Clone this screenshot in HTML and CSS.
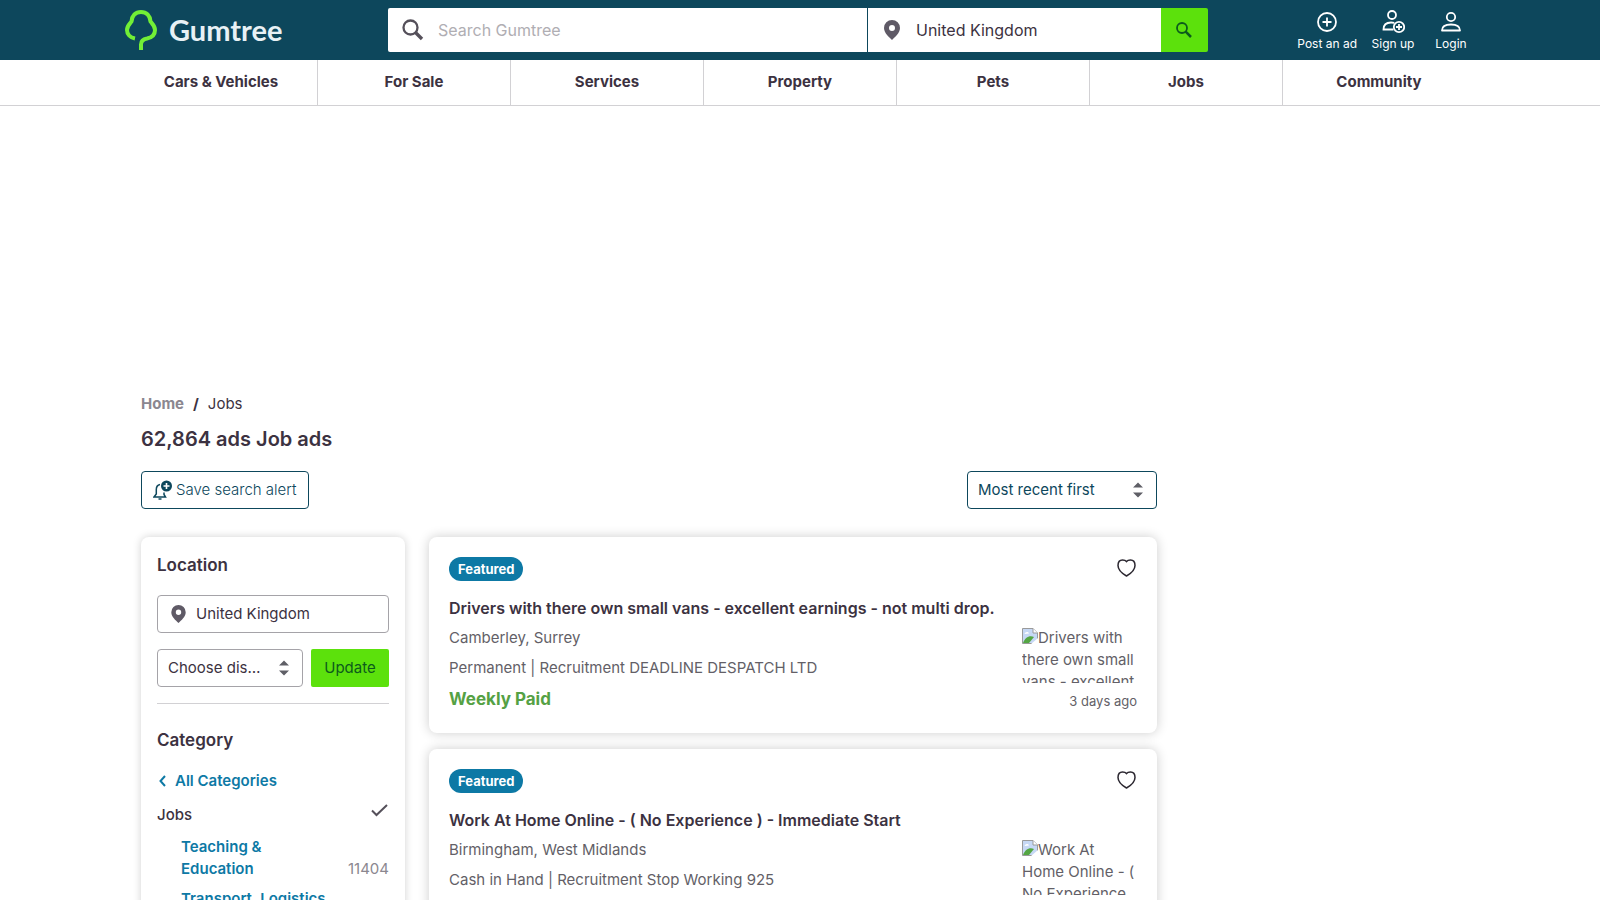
FILE: index.html
```
<!DOCTYPE html>
<html lang="en">
<head>
  <meta charset="utf-8">
  <meta name="viewport" content="width=device-width, initial-scale=1">
  <title>Jobs | Gumtree</title>
  <link rel="stylesheet" href="styles.css">
</head>
<body>
  <header class="header">
    <div class="container header-inner">
      <a href="#" class="logo">
        <svg width="32" height="40" viewBox="0 0 32 40" fill="none" stroke="#72ef36" stroke-width="4" aria-hidden="true">
          <path d="M10 28.5C5 27.5 2 24 2 20C2 16 4.500 14 6.500 11.500C7 5.500 10.500 2 16 2S25 5.500 25.500 11.500C27.500 14 30 16 30 20C30 24.500 27 27.500 22 28.500C18 29.200 16 31 16 34.500V40" stroke-linejoin="round"/>
        </svg>
        <span class="logo-text">Gumtree</span>
      </a>

      <form class="search">
        <label class="search-field search-keyword">
          <svg class="search-icon" width="22" height="22" viewBox="0 0 22 22" fill="none" stroke="#55505a" aria-hidden="true">
            <circle cx="8.500" cy="8.500" r="7" stroke-width="2.300"/>
            <path d="M13.500 13.500L20 20" stroke-width="3.400"/>
          </svg>
          <input type="text" placeholder="Search Gumtree" aria-label="Search Gumtree">
        </label>
        <label class="search-field search-location">
          <svg width="16" height="20" viewBox="0 0 16 20" fill="#5f5a66" fill-rule="evenodd" aria-hidden="true">
            <path d="M8 0a8 8 0 0 0-8 8c0 5 5 9 8 12 3-3 8-7 8-12a8 8 0 0 0-8-8zm0 5a3 3 0 1 1 0 6 3 3 0 0 1 0-6z"/>
          </svg>
          <input type="text" value="United Kingdom" aria-label="Location">
        </label>
        <button type="submit" class="search-button" aria-label="Search">
          <svg width="16" height="16" viewBox="0 0 16 16" fill="none" stroke="#0c5b1c" aria-hidden="true">
            <circle cx="6" cy="6" r="5" stroke-width="1.800"/>
            <path d="M9.700 9.700L15 15" stroke-width="2.500"/>
          </svg>
        </button>
      </form>

      <nav class="user-links">
        <a href="#">
          <svg width="24" height="24" viewBox="0 0 24 24" aria-hidden="true">
            <circle cx="12" cy="12" r="9"/>
            <path d="M12 7.500v9M7.500 12h9"/>
          </svg>
          <span>Post an ad</span>
        </a>
        <a href="#">
          <svg width="24" height="24" viewBox="0 0 24 24" aria-hidden="true">
            <circle cx="11" cy="5" r="4"/>
            <path d="M12.500 19.500H2.500C2.500 15 5.500 12.500 10 12.500c1.200 0 2.200.1 3.200.4"/>
            <circle cx="18" cy="17" r="5.200"/>
            <path d="M18 14v6M15 17h6"/>
          </svg>
          <span>Sign up</span>
        </a>
        <a href="#">
          <svg width="24" height="24" viewBox="0 0 24 24" aria-hidden="true">
            <circle cx="12" cy="7" r="4.200"/>
            <path d="M3 20.500c0-4 3-6 9-6s9 2 9 6z" stroke-linejoin="round"/>
          </svg>
          <span>Login</span>
        </a>
      </nav>
    </div>
  </header>

  <nav class="categories">
    <ul class="container">
      <li><a href="#">Cars &amp; Vehicles</a></li>
      <li><a href="#">For Sale</a></li>
      <li><a href="#">Services</a></li>
      <li><a href="#">Property</a></li>
      <li><a href="#">Pets</a></li>
      <li><a href="#">Jobs</a></li>
      <li><a href="#">Community</a></li>
    </ul>
  </nav>

  <div class="ad-banner"></div>

  <main class="container page">
    <div class="content">
      <div class="breadcrumb">
        <a href="#">Home</a>
        <b>/</b>
        <span>Jobs</span>
      </div>
      <h1>62,864 ads Job ads</h1>

      <div class="toolbar">
        <button type="button" class="save-button">
          <svg width="20" height="20" viewBox="0 0 20 20" fill="none" stroke="#0d475c" stroke-width="1.500" aria-hidden="true">
            <path d="M7 4.500C4.500 5 3.300 7 3.300 9.500V14L1 17H12.500L11 14.500V12.500"/>
            <path d="M5.500 19h3" stroke-width="1.500"/>
            <circle cx="13.500" cy="6" r="5.500" fill="#0d475c" stroke="none"/>
            <path d="M13.500 3v6M10.500 6h6" stroke="#fff" stroke-width="1.600"/>
          </svg>
          Save search alert
        </button>
        <div class="select sort-select">
          <select aria-label="Sort by">
            <option>Most recent first</option>
            <option>Nearest first</option>
          </select>
          <svg width="10" height="16" viewBox="0 0 10 16" fill="#5f5f66" aria-hidden="true"><path d="M0 5.500L5 0.500L10 5.500zM0 10.500L5 15.500L10 10.500z"/></svg>
        </div>
      </div>

      <div class="columns">
        <aside class="sidebar">
          <section class="location">
            <h2>Location</h2>
            <label class="location-input">
              <svg width="15" height="18" viewBox="0 0 16 20" fill="#5f5a66" fill-rule="evenodd" aria-hidden="true">
                <path d="M8 0a8 8 0 0 0-8 8c0 5 5 9 8 12 3-3 8-7 8-12a8 8 0 0 0-8-8zm0 5a3 3 0 1 1 0 6 3 3 0 0 1 0-6z"/>
              </svg>
              <input type="text" value="United Kingdom" aria-label="Location">
            </label>
            <div class="location-row">
              <div class="select distance-select">
                <select aria-label="Distance">
                  <option>Choose distance</option>
                  <option>+ 5 miles</option>
                </select>
                <svg width="10" height="16" viewBox="0 0 10 16" fill="#5f5f66" aria-hidden="true"><path d="M0 5.500L5 0.500L10 5.500zM0 10.500L5 15.500L10 10.500z"/></svg>
              </div>
              <button type="button" class="update-button">Update</button>
            </div>
          </section>

          <section class="category">
            <h2>Category</h2>
            <a href="#" class="all-categories">
              <svg width="7" height="12" viewBox="0 0 7 12" fill="none" stroke="#0d79a5" stroke-width="2" aria-hidden="true"><path d="M6 1L1.500 6L6 11"/></svg>
              All Categories
            </a>
            <div class="current-category">
              <span>Jobs</span>
              <svg width="18" height="14" viewBox="0 0 18 14" fill="none" stroke="#55505a" stroke-width="2" aria-hidden="true"><path d="M1 6.500L5.500 11L16 1"/></svg>
            </div>
            <ul class="subcategories">
              <li><a href="#">Teaching &amp; Education</a><span>11404</span></li>
              <li><a href="#">Transport, Logistics &amp; Delivery</a><span>8210</span></li>
            </ul>
          </section>
        </aside>

        <div class="listings">
          <article class="card">
            <div class="card-top">
              <span class="badge">Featured</span>
              <button type="button" class="heart" aria-label="Save this ad">
                <svg width="20" height="18" viewBox="0 0 20 18" fill="none" stroke="#2b2730" stroke-width="1.500" aria-hidden="true"><path d="M9.500 17C6 15 1 11 1 6.500C1 3 3 1 5.500 1C7.500 1 8.800 1.600 9.500 2.500C10.200 1.600 11.500 1 13.500 1C16 1 18 3 18 6.500C18 11 13 15 9.500 17z"/></svg>
              </button>
            </div>
            <h3><a href="#">Drivers with there own small vans - excellent earnings - not multi drop.</a></h3>
            <div class="card-body">
              <div class="card-text">
                <p>Camberley, Surrey</p>
                <p>Permanent | Recruitment DEADLINE DESPATCH LTD</p>
                <p class="pay">Weekly Paid</p>
              </div>
              <div class="card-side">
                <div class="thumb">
                  <svg width="16" height="16" viewBox="0 0 16 16" aria-hidden="true"><path d="M.5.500H11L15.500 5V15.500H.5z" fill="#c6d8f5" stroke="#9a9a9a"/><path d="M1 15C3 10 7 7 12 9L7 15z" fill="#54a643"/><path d="M2.500 6C3 4 6 3 7 5.500z" fill="#fff"/><path d="M11 .5V5H15.500zM16 10V16H9z" fill="#fff"/><path d="M11 .5V5H15.500" fill="none" stroke="#9a9a9a"/></svg><span>Drivers with<br>there own small<br>vans - excellent</span>
                </div>
                <time>3 days ago</time>
              </div>
            </div>
          </article>

          <article class="card">
            <div class="card-top">
              <span class="badge">Featured</span>
              <button type="button" class="heart" aria-label="Save this ad">
                <svg width="20" height="18" viewBox="0 0 20 18" fill="none" stroke="#2b2730" stroke-width="1.500" aria-hidden="true"><path d="M9.500 17C6 15 1 11 1 6.500C1 3 3 1 5.500 1C7.500 1 8.800 1.600 9.500 2.500C10.200 1.600 11.500 1 13.500 1C16 1 18 3 18 6.500C18 11 13 15 9.500 17z"/></svg>
              </button>
            </div>
            <h3><a href="#">Work At Home Online - ( No Experience ) - Immediate Start</a></h3>
            <div class="card-body">
              <div class="card-text">
                <p>Birmingham, West Midlands</p>
                <p>Cash in Hand | Recruitment Stop Working 925</p>
              </div>
              <div class="card-side">
                <div class="thumb">
                  <svg width="16" height="16" viewBox="0 0 16 16" aria-hidden="true"><path d="M.5.500H11L15.500 5V15.500H.5z" fill="#c6d8f5" stroke="#9a9a9a"/><path d="M1 15C3 10 7 7 12 9L7 15z" fill="#54a643"/><path d="M2.500 6C3 4 6 3 7 5.500z" fill="#fff"/><path d="M11 .5V5H15.500zM16 10V16H9z" fill="#fff"/><path d="M11 .5V5H15.500" fill="none" stroke="#9a9a9a"/></svg><span>Work At<br>Home Online - (<br>No Experience</span>
                </div>
              </div>
            </div>
          </article>
        </div>
      </div>
    </div>
  </main>
</body>
</html>
```
FILE: styles.css
```
* {
  box-sizing: border-box;
}

body {
  margin: 0;
  font-family: Inter, "Open Sans", sans-serif;
  font-size: 15px;
  line-height: 22px;
  color: #3c3241;
  background-color: #fff;
}

a {
  color: inherit;
  text-decoration: none;
}

h1, h2, h3, p, ul {
  margin: 0;
  padding: 0;
}

ul {
  list-style: none;
}

button, input, select {
  font: inherit;
  color: inherit;
}

button {
  cursor: pointer;
}

.container {
  max-width: 1350px;
  margin: 0 auto;
}

/* Header */
.header {
  background-color: #0d475c;
}

.header-inner {
  display: flex;
  align-items: center;
  height: 60px;
}

.logo {
  display: flex;
  align-items: center;
  gap: 12px;
  width: 263px;
}

.logo-text {
  font-family: Lato, sans-serif;
  font-size: 29px;
  font-weight: 700;
  line-height: 36px;
  color: #e8f1f5;
}

.search {
  display: flex;
  flex: 1;
  max-width: 820px;
  height: 44px;
}

.search-field {
  display: flex;
  align-items: center;
  gap: 16px;
  padding: 0 16px;
  background-color: #fff;
}

.search-keyword {
  flex: 1;
  gap: 14px;
  padding-left: 14px;
  margin-right: 1px;
  border-radius: 2px 0 0 2px;
}

.search-field input {
  flex: 1;
  min-width: 0;
  padding: 0;
  border: none;
  outline: none;
  background: none;
  font-size: 16px;
}

.search-field input::placeholder {
  color: #b0aeb3;
}

.search-location {
  width: 293px;
}

.search-button {
  display: flex;
  align-items: center;
  justify-content: center;
  width: 47px;
  padding: 0 2px 0 0;
  border: none;
  border-radius: 0 2px 2px 0;
  background-color: #5ce10c;
}

.user-links {
  display: flex;
  gap: 14px;
  margin-left: auto;
  padding-top: 2px;
  padding-right: 2px;
  color: #fff;
  font-size: 12px;
  line-height: 16px;
}

.user-links a {
  display: flex;
  flex-direction: column;
  align-items: center;
  min-width: 44px;
  gap: 2px;
}

.user-links svg {
  fill: none;
  stroke: #fff;
  stroke-width: 1.8;
}

/* Category bar */
.categories {
  border-bottom: 1px solid #d2d1d4;
}

.categories ul {
  display: flex;
}

.categories li {
  flex: 1;
  text-align: center;
  font-weight: 700;
}

.categories li + li {
  border-left: 1px solid #d2d1d4;
}

.categories a {
  display: block;
  padding: 11px 0 12px;
}

.ad-banner {
  height: 287px;
}

/* Page */
.page {
  padding: 0 16px;
}

.content {
  max-width: 1016px;
}

.breadcrumb {
  display: flex;
  gap: 9px;
}

.breadcrumb a {
  font-weight: 700;
  color: #8b8790;
}

h1 {
  margin-top: 10px;
  font-size: 20px;
  font-weight: 600;
  line-height: 28px;
}

.toolbar {
  display: flex;
  justify-content: space-between;
  margin-top: 18px;
  color: #0d475c;
}

.save-button {
  display: flex;
  align-items: center;
  gap: 3px;
  height: 38px;
  padding: 0 12px 0 11px;
  border: 1px solid #0d475c;
  border-radius: 4px;
  background-color: #fff;
  font-weight: 300;
}

.select {
  position: relative;
}

.select select {
  width: 100%;
  height: 38px;
  padding: 0 40px 0 10px;
  border: 1px solid #a5a3a8;
  border-radius: 4px;
  background-color: #fff;
  appearance: none;
  text-overflow: ellipsis;
}

.select svg {
  position: absolute;
  top: 11px;
  right: 14px;
  pointer-events: none;
}

.sort-select {
  width: 190px;
}

.sort-select select {
  border-color: #0d475c;
}

.columns {
  display: flex;
  align-items: flex-start;
  gap: 24px;
  margin-top: 28px;
}

/* Sidebar */
.sidebar {
  width: 264px;
  padding: 16px;
  border-radius: 8px;
  box-shadow: 0 0 8px rgba(0, 0, 0, 0.18);
}

h2 {
  font-size: 17px;
  font-weight: 600;
  line-height: 24px;
}

.location {
  padding-bottom: 16px;
  border-bottom: 1px solid #d2d1d4;
}

.location-input {
  display: flex;
  align-items: center;
  gap: 10px;
  height: 38px;
  margin-top: 18px;
  padding: 0 13px;
  border: 1px solid #a5a3a8;
  border-radius: 4px;
}

.location-input input {
  flex: 1;
  min-width: 0;
  padding: 0;
  border: none;
  outline: none;
  background: none;
}

.location-row {
  display: flex;
  gap: 8px;
  margin-top: 16px;
}

.distance-select {
  flex: 1;
}

.update-button {
  width: 78px;
  height: 38px;
  padding: 0;
  border: none;
  border-radius: 2px;
  background-color: #5ce10c;
  color: #0c5b1c;
}

.category {
  padding-top: 24px;
}

.all-categories {
  display: flex;
  align-items: center;
  gap: 9px;
  margin-top: 18px;
  padding-left: 2px;
  font-weight: 600;
  color: #0d79a5;
}

.current-category {
  display: flex;
  justify-content: space-between;
  margin-top: 12px;
  font-weight: 500;
}

.subcategories {
  padding-top: 2px;
  padding-left: 24px;
}

.subcategories li {
  display: flex;
  align-items: flex-end;
  justify-content: space-between;
  margin-top: 8px;
}

.subcategories a {
  max-width: 152px;
  font-weight: 600;
  color: #0d79a5;
}

.subcategories li:first-child a {
  max-width: 100px;
}

.subcategories span {
  color: #8b8790;
}

/* Listings */
.listings {
  display: flex;
  flex: 1;
  flex-direction: column;
  gap: 16px;
}

.card {
  min-height: 196px;
  padding: 20px;
  border-radius: 8px;
  background-color: #fff;
  box-shadow: 0 0 12px rgba(0, 0, 0, 0.2);
  color: #635f67;
}

.card-top {
  display: flex;
  align-items: flex-start;
  justify-content: space-between;
}

.badge {
  padding: 0 9px;
  border-radius: 12px;
  background-color: #0d79a5;
  color: #fff;
  font-size: 13px;
  font-weight: 700;
  line-height: 24px;
}

.heart {
  display: flex;
  padding: 2px 0 0;
  border: none;
  background: none;
}

h3 {
  margin-top: 16px;
  font-size: 16px;
  font-weight: 600;
  line-height: 22px;
  color: #3c3241;
}

.card-body {
  display: flex;
  justify-content: space-between;
  margin-top: 8px;
}

.card-text p {
  margin-bottom: 8px;
}

.card-text .pay {
  margin-bottom: 0;
  font-size: 17px;
  font-weight: 700;
  line-height: 24px;
  color: #55a144;
}

.card-side {
  width: 115px;
  text-align: right;
}

.thumb {
  height: 56px;
  overflow: hidden;
  text-align: left;
  white-space: nowrap;
}

.thumb svg {
  vertical-align: -1px;
}

.card-side time {
  display: block;
  margin-top: 8px;
  font-size: 13px;
  line-height: 20px;
}
```
